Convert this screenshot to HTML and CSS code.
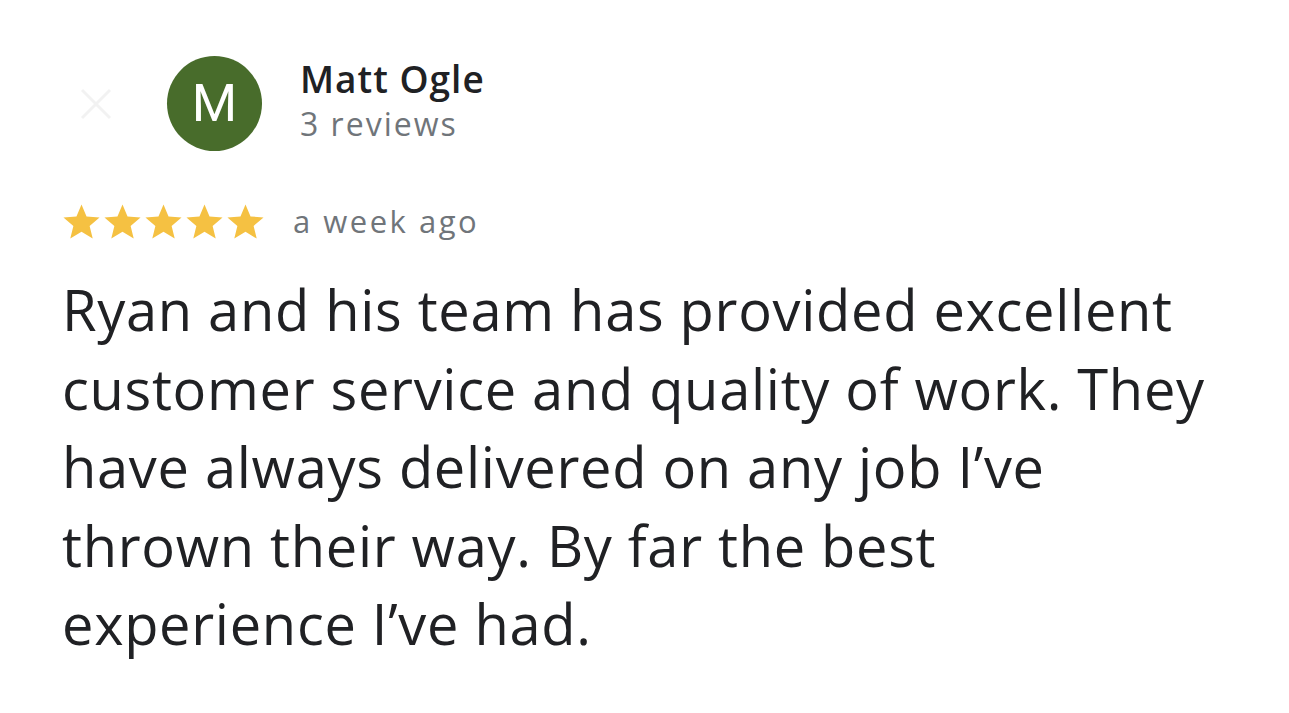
FILE: index.html
```html
<!DOCTYPE html>
<html lang="en">
<head>
<meta charset="utf-8">
<title>Review</title>
<link rel="stylesheet" href="styles.css">
</head>
<body>
<div class="review">
  <div class="header">
    <svg class="close" width="34" height="34" viewBox="0 0 34 34"><path d="M3 3L31 31M31 3L3 31" stroke="#f2f2f2" stroke-width="3" fill="none"/></svg>
    <div class="avatar">M</div>
    <div class="who">
      <div class="name">Matt Ogle</div>
      <div class="count">3 reviews</div>
    </div>
  </div>
  <div class="meta">
    <div class="stars">
      <svg viewBox="0 0 24 24"><path d="M12 1.5l3.1 7.4 8 .6-6.1 5.2 1.9 7.8L12 18.3l-6.9 4.2 1.9-7.8L.9 9.5l8-.6z"/></svg>
      <svg viewBox="0 0 24 24"><path d="M12 1.5l3.1 7.4 8 .6-6.1 5.2 1.9 7.8L12 18.3l-6.9 4.2 1.9-7.8L.9 9.5l8-.6z"/></svg>
      <svg viewBox="0 0 24 24"><path d="M12 1.5l3.1 7.4 8 .6-6.1 5.2 1.9 7.8L12 18.3l-6.9 4.2 1.9-7.8L.9 9.5l8-.6z"/></svg>
      <svg viewBox="0 0 24 24"><path d="M12 1.5l3.1 7.4 8 .6-6.1 5.2 1.9 7.8L12 18.3l-6.9 4.2 1.9-7.8L.9 9.5l8-.6z"/></svg>
      <svg viewBox="0 0 24 24"><path d="M12 1.5l3.1 7.4 8 .6-6.1 5.2 1.9 7.8L12 18.3l-6.9 4.2 1.9-7.8L.9 9.5l8-.6z"/></svg>
    </div>
    <span class="when">a week ago</span>
  </div>
  <p class="text">Ryan and his team has provided excellent<br>customer service and quality of work. They<br>have always delivered on any job I’ve<br>thrown their way. By far the best<br>experience I’ve had.</p>
</div>
</body>
</html>
```
FILE: styles.css
```css
html, body {
  margin: 0;
  padding: 0;
  background: #ffffff;
}
body {
  font-family: "Open Sans", Roboto, "Liberation Sans", sans-serif;
  color: #202124;
}
.review {
  padding: 56px 0 0 62px;
}
.header {
  display: flex;
  align-items: center;
}
.close {
  margin: 0 0 0 17px;
}
.avatar {
  width: 95px;
  height: 95px;
  border-radius: 50%;
  background: #486c2b;
  color: #ffffff;
  font-family: Roboto, "Liberation Sans", sans-serif;
  font-size: 52px;
  display: flex;
  align-items: center;
  justify-content: center;
  margin-left: 54px;
}
.who {
  margin-left: 38px;
  margin-top: -8px;
}
.name {
  font-size: 37px;
  font-weight: 600;
  letter-spacing: 1px;
  line-height: 48px;
  color: #202124;
}
.count {
  font-size: 32px;
  line-height: 42px;
  letter-spacing: 2px;
  color: #70757a;
}
.meta {
  display: flex;
  align-items: center;
  margin-top: 50px;
}
.stars {
  display: flex;
  gap: 2px;
}
.stars svg {
  width: 39px;
  height: 39px;
  fill: #f5c142;
}
.when {
  margin-left: 28px;
  font-size: 31px;
  letter-spacing: 2.5px;
  line-height: 41px;
  color: #70757a;
}
.text {
  margin: 28px 0 0 0;
  font-size: 56px;
  letter-spacing: 0.7px;
  line-height: 78.5px;
  color: #202124;
}
```
